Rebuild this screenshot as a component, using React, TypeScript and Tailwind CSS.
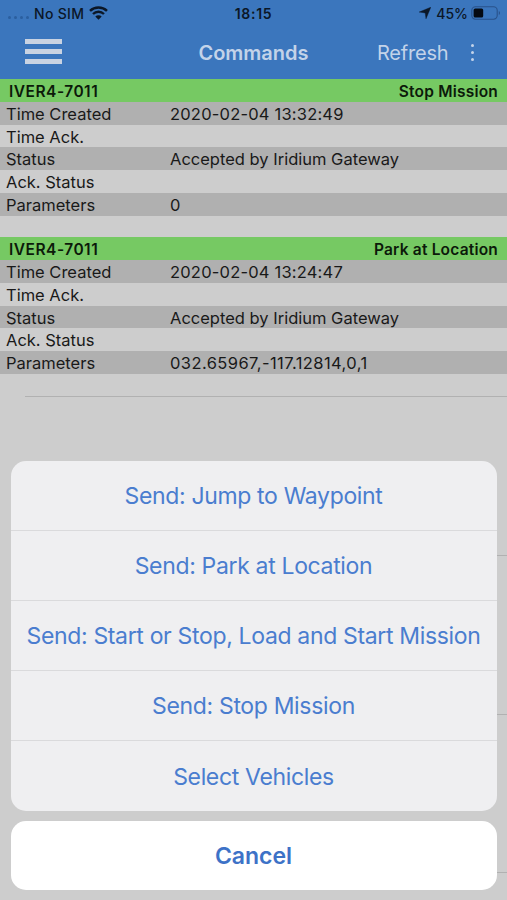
// App.tsx
interface Command {
    vehicle: string;
    name: string;
    rows: { label: string; value: string; spacing?: string }[];
}

const commands: Command[] = [
    {
        vehicle: 'IVER4-7011',
        name: 'Stop Mission',
        rows: [
            { label: 'Time Created', value: '2020-02-04 13:32:49', spacing: 'tracking-[0.2px]' },
            { label: 'Time Ack.', value: '' },
            { label: 'Status', value: 'Accepted by Iridium Gateway' },
            { label: 'Ack. Status', value: '' },
            { label: 'Parameters', value: '0' },
        ],
    },
    {
        vehicle: 'IVER4-7011',
        name: 'Park at Location',
        rows: [
            { label: 'Time Created', value: '2020-02-04 13:24:47', spacing: 'tracking-[0.2px]' },
            { label: 'Time Ack.', value: '' },
            { label: 'Status', value: 'Accepted by Iridium Gateway' },
            { label: 'Ack. Status', value: '' },
            { label: 'Parameters', value: '032.65967,-117.12814,0,1', spacing: 'tracking-[0.42px]' },
        ],
    },
];

const actions = [
    'Send: Jump to Waypoint',
    'Send: Park at Location',
    'Send: Start or Stop, Load and Start Mission',
    'Send: Stop Mission',
    'Select Vehicles',
];

function StatusBar() {
    return (
        <div className="grid h-[26px] grid-cols-[1fr_auto_1fr] items-center px-[7px] text-[14px] font-medium text-[#0b1727]">
            <div className="flex items-center">
                <div className="ml-px mt-2 flex gap-[3px]">
                    {[0, 1, 2, 3].map((dot) => (
                        <span key={dot} className="size-[3px] rounded-full bg-[#2b5f9f]"></span>
                    ))}
                </div>
                <span className="ml-[5px] tracking-[0.3px]">No SIM</span>
                <svg className="ml-[5px] h-[14px] w-[19px]" viewBox="0 0 19 14" fill="none" stroke="currentColor">
                    <path d="M1 4.8a12.3 12.3 0 0 1 17 0" strokeWidth="2.5" />
                    <path d="M4 8a8 8 0 0 1 11 0" strokeWidth="2.4" />
                    <path d="M9.5 13.8 6.3 10.6a4.6 4.6 0 0 1 6.4 0z" fill="currentColor" stroke="none" />
                </svg>
            </div>
            <span className="font-semibold tracking-[0.7px]">18:15</span>
            <div className="flex items-center justify-end">
                <svg className="size-3" viewBox="0 0 12 12" fill="currentColor">
                    <path d="M11.8.2 7 11.8 6.2 5.9.2 5.1z" stroke="currentColor" strokeWidth=".4" />
                </svg>
                <span className="ml-[5px]">45%</span>
                <svg className="-mr-px ml-[3px] h-[14px] w-[30px]" viewBox="0 0 30 14">
                    <rect x=".8" y=".8" width="25.4" height="12.4" rx="3.6" fill="none" stroke="#29528a" strokeWidth="1.1" />
                    <rect x="2.6" y="2.5" width="9.6" height="9" rx="1.6" fill="#050a12" />
                    <path d="M27.8 5v4c1.6-.6 1.6-3.4 0-4z" fill="#29528a" />
                </svg>
            </div>
        </div>
    );
}

function NavBar() {
    return (
        <div className="grid h-[53px] grid-cols-[1fr_auto_1fr] items-center px-[25px] text-[#c3d3e9]">
            <button className="mb-[2px] flex w-[37px] flex-col gap-[5.5px]" aria-label="Menu">
                <span className="h-[4.7px] w-full bg-[#c9d3e2]"></span>
                <span className="h-[4.7px] w-full bg-[#c9d3e2]"></span>
                <span className="h-[4.7px] w-full bg-[#c9d3e2]"></span>
            </button>
            <h1 className="text-[20px] font-semibold">Commands</h1>
            <div className="mr-2 flex items-center justify-end">
                <button className="text-[20px] tracking-[-0.2px]">Refresh</button>
                <div className="ml-[23px] flex flex-col gap-[4.2px]">
                    <span className="size-[2.6px] rounded-full bg-[#c3d3e9]"></span>
                    <span className="size-[2.6px] rounded-full bg-[#c3d3e9]"></span>
                    <span className="size-[2.6px] rounded-full bg-[#c3d3e9]"></span>
                </div>
            </div>
        </div>
    );
}

function CommandItem({ command }: { command: Command }) {
    return (
        <section className="h-[158.4px] text-[16.5px] text-[#191919]">
            <div className="flex h-[22.75px] items-center justify-between bg-[#76c963] px-[9px] pt-[2px] text-[15.5px] font-semibold text-[#0c1a0a]">
                <span className="tracking-[0.5px]">{command.vehicle}</span>
                <span className="tracking-[0.2px]">{command.name}</span>
            </div>
            {command.rows.map((row) => (
                <div key={row.label} className="flex h-[22.75px] items-center pl-[6px] pt-[2px] odd:bg-[#cdcdcd] even:bg-[#b0b0b0]">
                    <span className="w-[164px]">{row.label}</span>
                    <span className={row.spacing}>{row.value}</span>
                </div>
            ))}
        </section>
    );
}

function ActionSheet() {
    return (
        <div className="absolute inset-x-[10.5px] bottom-[10px] flex flex-col gap-[10px] text-[23px]">
            <div className="overflow-hidden rounded-[15px] bg-[#efeff1] tracking-[-0.34px] text-[#4a7dcf]">
                {actions.map((action) => (
                    <button
                        key={action}
                        className="flex h-[70px] w-full items-center justify-center whitespace-nowrap border-b border-[#dadadc] pt-[2px] last:border-b-0"
                    >
                        {action}
                    </button>
                ))}
            </div>
            <button className="h-[69px] rounded-[15px] bg-white pt-[2px] font-semibold text-[#3d72c7]">Cancel</button>
        </div>
    );
}

export default function App() {
    return (
        <div className="relative h-[900px] w-[507px] overflow-hidden bg-[#cdcdcd] font-[Inter,sans-serif]">
            <header className="h-[79px] bg-[#3b76bd]">
                <StatusBar />
                <NavBar />
            </header>
            <main>
                {commands.map((command) => (
                    <CommandItem key={command.name} command={command} />
                ))}
                {/* empty list cells */}
                {[0, 1, 2, 3].map((cell) => (
                    <div key={cell} className="ml-[25px] h-[158.9px] border-t-[1.5px] border-[#b1b1b1]"></div>
                ))}
            </main>
            <ActionSheet />
        </div>
    );
}
